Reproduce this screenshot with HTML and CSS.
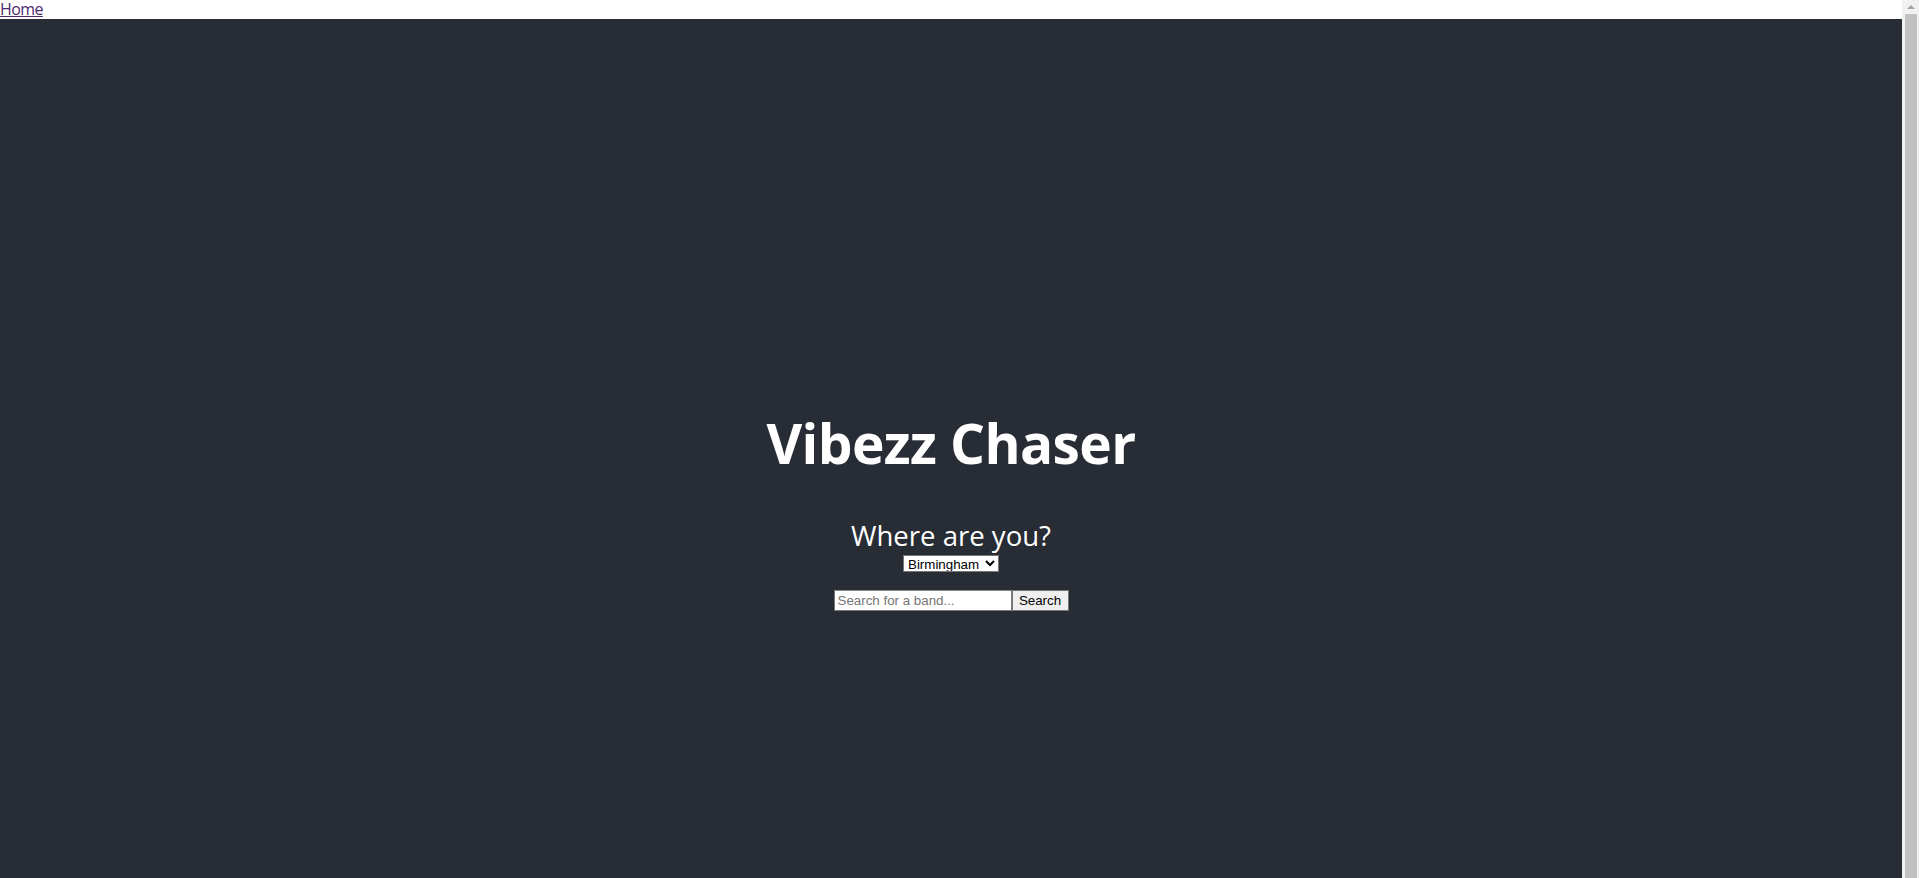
FILE: index.html
```html
<!DOCTYPE html>
<html lang="en">
<head>
<meta charset="utf-8">
<title>Vibezz Chaser</title>
<link rel="stylesheet" href="styles.css">
</head>
<body>
<div class="viewport">
  <div class="page">
    <nav class="nav">
      <a class="nav-link" href="#">Home</a>
    </nav>
    <header class="app-header">
      <h1 class="title">Vibezz Chaser</h1>
      <div class="location">
        <p class="location-label">Where are you?</p>
        <select class="location-select">
          <option>Birmingham</option>
          <option>London</option>
          <option>Manchester</option>
        </select>
      </div>
      <form class="search-form">
        <input class="search-input" type="text" placeholder="Search for a band...">
        <button class="search-button" type="button">Search</button>
      </form>
    </header>
  </div>
  <div class="scrollbar" aria-hidden="true">
    <div class="scrollbar-arrow"><span class="arrow-up"></span></div>
    <div class="scrollbar-thumb"></div>
  </div>
</div>
</body>
</html>
```

FILE: styles.css
```css
html, body {
  margin: 0;
  padding: 0;
  overflow: hidden;
}

body {
  font-family: "Open Sans", "Noto Sans", sans-serif;
  background: #ffffff;
}

.viewport {
  display: flex;
  height: 100vh;
}

.page {
  flex: 1;
  min-width: 0;
  overflow: hidden;
}

.scrollbar {
  width: 17px;
  flex: none;
  background: #f1f1f1;
  display: flex;
  flex-direction: column;
}

.scrollbar-arrow {
  height: 14px;
  display: flex;
  align-items: center;
  justify-content: center;
}

.arrow-up {
  width: 0;
  height: 0;
  border-left: 4px solid transparent;
  border-right: 4px solid transparent;
  border-bottom: 4px solid #a3a3a3;
}

.scrollbar-thumb {
  flex: 1;
  margin: 0 2px 0 3px;
  background: #c1c1c1;
}

.nav {
  height: 19px;
  line-height: 19px;
  font-size: 16px;
  background: #ffffff;
}

.nav-link {
  color: #4b2a6f;
  text-decoration: underline;
  letter-spacing: -0.6px;
}

.app-header {
  box-sizing: border-box;
  min-height: 100vh;
  padding-top: 101px;
  background-color: #282c34;
  color: #ffffff;
  display: flex;
  flex-direction: column;
  align-items: center;
  justify-content: center;
  font-size: calc(10px + 2vmin);
}

.title {
  margin: 0;
  font-size: 55px;
  line-height: 73px;
  font-weight: 700;
  letter-spacing: -0.6px;
}

.location {
  margin-top: 38px;
  display: flex;
  flex-direction: column;
  align-items: center;
  gap: 1px;
}

.location-label {
  margin: 0;
  line-height: 37px;
  font-weight: 400;
}

.location-select {
  height: 17px;
  width: 96px;
  padding: 0;
  font-family: "Liberation Sans", Arial, sans-serif;
  font-size: 13.33px;
  border: 1px solid #767676;
  background: #ffffff;
  color: #000000;
  border-radius: 0;
}

.search-form {
  margin-top: 18px;
  display: flex;
}

.search-input {
  box-sizing: border-box;
  width: 178px;
  height: 21px;
  padding: 1px 3px;
  font-family: "Liberation Sans", Arial, sans-serif;
  font-size: 13.33px;
  border: 1px solid #767676;
  border-top-color: #8a8a8a;
  background: #ffffff;
  color: #000000;
}

.search-input::placeholder {
  color: #757575;
}

.search-button {
  box-sizing: border-box;
  height: 21px;
  width: 57px;
  padding: 1px 6px;
  font-family: "Liberation Sans", Arial, sans-serif;
  font-size: 13.33px;
  border: 1px solid #767676;
  background: #efefef;
  color: #000000;
  border-radius: 0;
}
```
